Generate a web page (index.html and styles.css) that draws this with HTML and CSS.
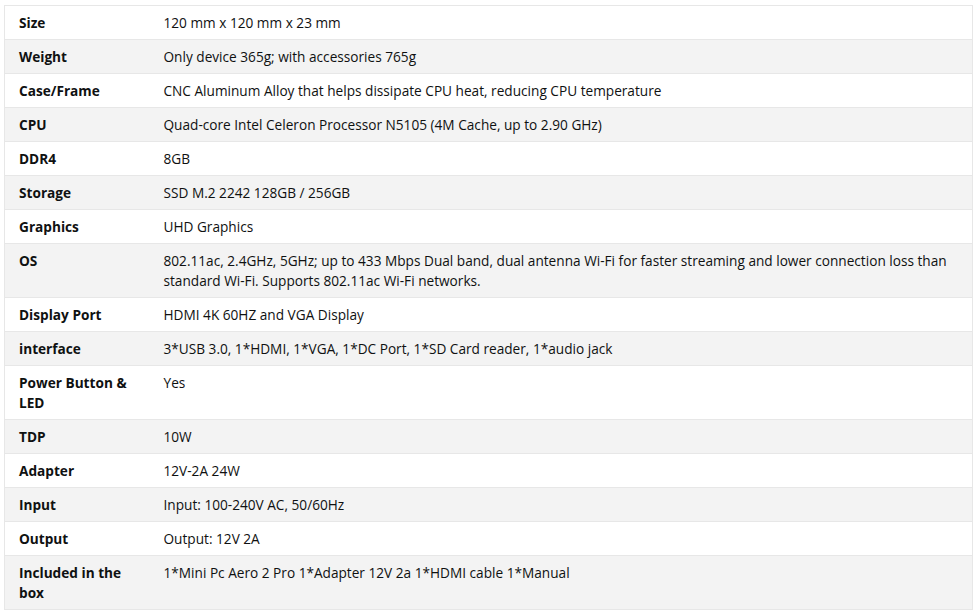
FILE: index.html
```html
<!DOCTYPE html>
<html lang="en">
<head>
    <meta charset="UTF-8">
    <meta name="viewport" content="width=device-width, initial-scale=1.0">
    <title>Product Specifications</title>
    <link rel="stylesheet" href="styles.css">
</head>
<body>
    <table class="spec-table">
        <tbody>
            <tr><th>Size</th><td>120 mm x 120 mm x 23 mm</td></tr>
            <tr><th>Weight</th><td>Only device 365g; with accessories 765g</td></tr>
            <tr><th>Case/Frame</th><td>CNC Aluminum Alloy that helps dissipate CPU heat, reducing CPU temperature</td></tr>
            <tr><th>CPU</th><td>Quad-core Intel Celeron Processor N5105 (4M Cache, up to 2.90 GHz)</td></tr>
            <tr><th>DDR4</th><td>8GB</td></tr>
            <tr><th>Storage</th><td>SSD M.2 2242 128GB / 256GB</td></tr>
            <tr><th>Graphics</th><td>UHD Graphics</td></tr>
            <tr><th>OS</th><td>802.11ac, 2.4GHz, 5GHz; up to 433 Mbps Dual band, dual antenna Wi-Fi for faster streaming and lower connection loss than standard Wi-Fi. Supports 802.11ac Wi-Fi networks.</td></tr>
            <tr><th>Display Port</th><td>HDMI 4K 60HZ and VGA Display</td></tr>
            <tr><th>interface</th><td>3*USB 3.0, 1*HDMI, 1*VGA, 1*DC Port, 1*SD Card reader, 1*audio jack</td></tr>
            <tr><th>Power Button &amp; LED</th><td>Yes</td></tr>
            <tr><th>TDP</th><td>10W</td></tr>
            <tr><th>Adapter</th><td>12V-2A 24W</td></tr>
            <tr><th>Input</th><td>Input: 100-240V AC, 50/60Hz</td></tr>
            <tr><th>Output</th><td>Output: 12V 2A</td></tr>
            <tr><th>Included in the box</th><td>1*Mini Pc Aero 2 Pro 1*Adapter 12V 2a 1*HDMI cable 1*Manual</td></tr>
        </tbody>
    </table>
</body>
</html>
```

FILE: styles.css
```css
* {
    margin: 0;
    padding: 0;
    box-sizing: border-box;
}

body {
    background-color: #ffffff;
    color: #0f1111;
    font-family: 'Open Sans', 'Noto Sans', sans-serif;
    font-size: 13.65px;
    line-height: 20px;
    padding: 5px 5px 0 4px;
}

.spec-table {
    width: 969px;
    border-collapse: collapse;
    border: 1px solid #e7e7e7;
}

.spec-table tr:nth-child(even) {
    background-color: #f3f3f3;
}

.spec-table th,
.spec-table td {
    border-top: 1px solid #e7e7e7;
    border-bottom: 1px solid #e7e7e7;
    padding: 7px 14px 6px 14px;
    text-align: left;
    vertical-align: top;
}

.spec-table th {
    width: 145px;
    font-weight: 700;
}

.spec-table td {
    font-weight: 400;
}
```
